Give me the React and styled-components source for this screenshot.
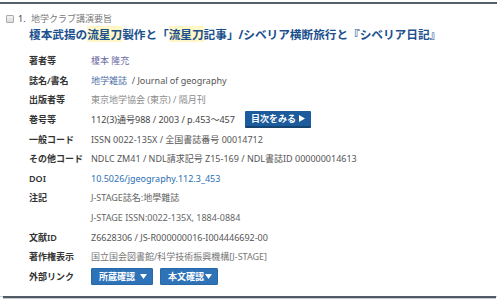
import styled, { createGlobalStyle } from 'styled-components';

const GlobalStyle = createGlobalStyle`
    body {
        margin: 0;
        background: #fff;
        font-family: "Noto Sans", "Noto Sans CJK JP", sans-serif;
    }
`;

const Page = styled.div`
    width: 500px;
    height: 300px;
    padding-top: 2px;
    box-sizing: border-box;
    overflow: hidden;
`;

const Item = styled.div`
    width: 497px;
    border-top: 2px solid #56606b;
    box-shadow: 0 1px 0 #c9ced3;
    padding: 9px 0 10px 6px;
    box-sizing: border-box;
`;

const Header = styled.div`
    display: flex;
    align-items: center;
    height: 12px;
    font-size: 9px;
    line-height: 12px;
    color: #555;
`;

const Check = styled.span`
    width: 6px;
    height: 6px;
    border: 1px solid #aaa;
    background: linear-gradient(#f4f4f4, #dcdcdc);
    border-radius: 1px;
    margin-right: 4px;
`;

const Num = styled.span`
    width: 13px;
    color: #444;
`;

const Series = styled.span`
    color: #777;
`;

const Body = styled.div`
    padding-left: 23px;
`;

const Title = styled.h2`
    margin: 1px 0 0;
    height: 16px;
    font-size: 11.7px;
    line-height: 16px;
    font-weight: bold;
    color: #1b4f8e;
    white-space: nowrap;
    letter-spacing: -0.05px;
`;

const Mark = styled.span`
    background: #fff7c6;
`;

const Table = styled.div`
    margin-top: 9px;
    display: grid;
    grid-template-columns: 62px 1fr;
    grid-auto-rows: 19.6px;
    font-size: 9px;
    align-items: center;
`;

const Label = styled.div`
    color: #333;
    font-weight: 600;
    white-space: nowrap;
`;

const Value = styled.div`
    color: ${(p) => p.$color || '#666'};
    white-space: nowrap;
    display: flex;
    align-items: center;
`;

const Link = styled.span`
    color: ${(p) => p.$color || '#4d6ea8'};
`;

const TocButton = styled.span`
    margin-left: 10px;
    height: 15px;
    padding: 0 6px;
    display: inline-flex;
    align-items: center;
    background: #1c5b9c;
    border-bottom: 2px solid #14446f;
    color: #fff;
    font-weight: bold;
    font-size: 9px;
    border-radius: 1px;
`;

const Buttons = styled.div`
    display: flex;
    gap: 7px;
`;

const Drop = styled.span`
    height: 17px;
    width: ${(p) => p.$w}px;
    box-sizing: border-box;
    display: inline-flex;
    align-items: center;
    justify-content: space-between;
    padding: 0 5px 0 7px;
    background: #2e73b8;
    border: 1px solid #2868a6;
    color: #fff;
    font-weight: bold;
    font-size: 9px;
    border-radius: 1px;
`;

const Footer = styled.div`
    margin: 0 4px 0 3px;
    border-top: 2px solid #4f5a66;
    box-shadow: 0 1px 0 #c4c9ce;
`;

const Caret = () => (
    <svg width="7" height="5" viewBox="0 0 7 5">
        <path d="M0 0h7L3.5 5z" fill="#fff" />
    </svg>
);

const Play = () => (
    <svg width="6" height="7" viewBox="0 0 6 7" style={{ marginLeft: 3 }}>
        <path d="M0 0l6 3.5L0 7z" fill="#fff" />
    </svg>
);

export default function App() {
    return (
        <Page>
            <GlobalStyle />
            <Item>
                <Header>
                    <Check />
                    <Num>1.</Num>
                    <Series>地学クラブ講演要旨</Series>
                </Header>
                <Body>
                    <Title>
                        榎本武揚の<Mark>流星刀</Mark>製作と「<Mark>流星刀</Mark>記事」/シベリア横断旅行と『シベリア日記』
                    </Title>
                    <Table>
                        <Label>著者等</Label>
                        <Value><Link $color="#6b6aa3">榎本 隆充</Link></Value>

                        <Label>誌名/書名</Label>
                        <Value $color="#555"><Link>地学雑誌</Link>&nbsp; / Journal of geography</Value>

                        <Label>出版者等</Label>
                        <Value $color="#8a8a8a">東京地学協会 (東京) / 隔月刊</Value>

                        <Label>巻号等</Label>
                        <Value $color="#444">
                            112(3)通号988 / 2003 / p.453〜457
                            <TocButton>目次をみる<Play /></TocButton>
                        </Value>

                        <Label>一般コード</Label>
                        <Value $color="#555">ISSN 0022-135X / 全国書誌番号 00014712</Value>

                        <Label>その他コード</Label>
                        <Value $color="#555">NDLC ZM41 / NDL請求記号 Z15-169 / NDL書誌ID 000000014613</Value>

                        <Label>DOI</Label>
                        <Value $color="#2a6fb4">10.5026/jgeography.112.3_453</Value>

                        <Label>注記</Label>
                        <Value $color="#666">J-STAGE誌名:地學雜誌</Value>

                        <Label />
                        <Value $color="#666">J-STAGE ISSN:0022-135X, 1884-0884</Value>

                        <Label>文献ID</Label>
                        <Value $color="#555">Z6628306 / JS-R000000016-I004446692-00</Value>

                        <Label>著作権表示</Label>
                        <Value $color="#777">国立国会図書館/科学技術振興機構[J-STAGE]</Value>

                        <Label>外部リンク</Label>
                        <Value>
                            <Buttons>
                                <Drop $w={62}>所蔵確認<Caret /></Drop>
                                <Drop $w={58}>本文確認<Caret /></Drop>
                            </Buttons>
                        </Value>
                    </Table>
                </Body>
            </Item>
            <Footer />
        </Page>
    );
}
